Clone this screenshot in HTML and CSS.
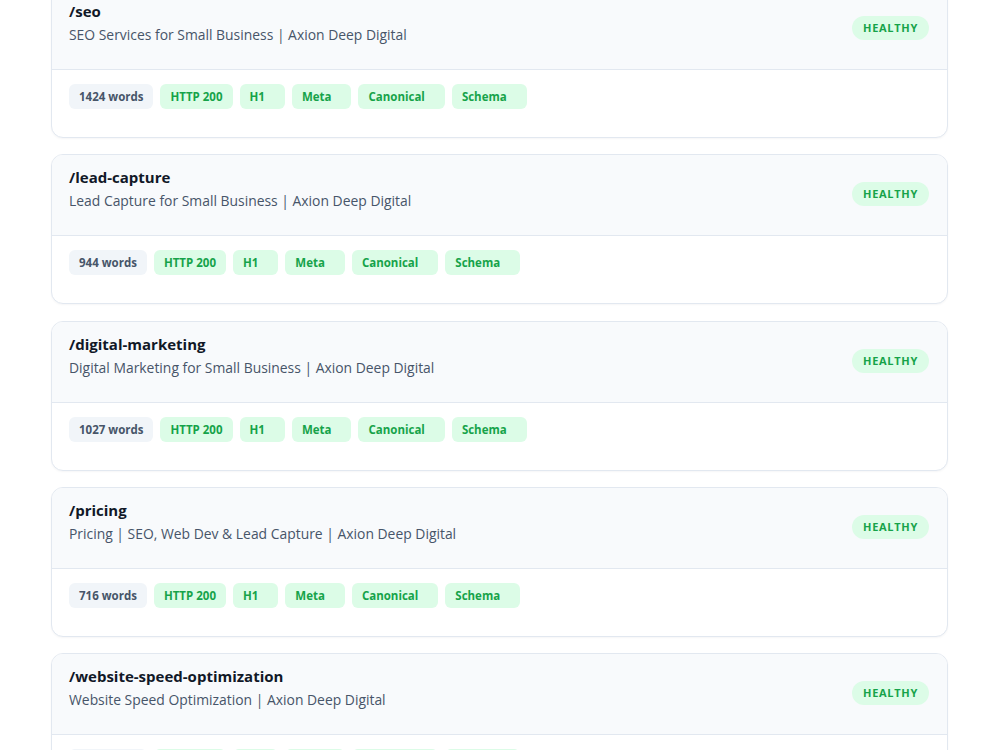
FILE: index.html
```html
<!DOCTYPE html>
<html lang="en">
<head>
<meta charset="utf-8">
<title>Pages</title>
<link rel="stylesheet" href="styles.css">
</head>
<body>
<main class="page-list">
  <section class="page-card">
    <header class="page-head">
      <div class="page-info">
        <div class="page-path">/seo</div>
        <div class="page-title">SEO Services for Small Business | Axion Deep Digital</div>
      </div>
      <span class="status">HEALTHY</span>
    </header>
    <div class="page-body">
      <span class="chip chip-gray">1424 words</span>
      <span class="chip chip-green">HTTP 200</span>
      <span class="chip chip-green chip-wide">H1</span>
      <span class="chip chip-green chip-wide">Meta</span>
      <span class="chip chip-green chip-wide">Canonical</span>
      <span class="chip chip-green chip-wide">Schema</span>
    </div>
  </section>
  <section class="page-card">
    <header class="page-head">
      <div class="page-info">
        <div class="page-path">/lead-capture</div>
        <div class="page-title">Lead Capture for Small Business | Axion Deep Digital</div>
      </div>
      <span class="status">HEALTHY</span>
    </header>
    <div class="page-body">
      <span class="chip chip-gray">944 words</span>
      <span class="chip chip-green">HTTP 200</span>
      <span class="chip chip-green chip-wide">H1</span>
      <span class="chip chip-green chip-wide">Meta</span>
      <span class="chip chip-green chip-wide">Canonical</span>
      <span class="chip chip-green chip-wide">Schema</span>
    </div>
  </section>
  <section class="page-card">
    <header class="page-head">
      <div class="page-info">
        <div class="page-path">/digital-marketing</div>
        <div class="page-title">Digital Marketing for Small Business | Axion Deep Digital</div>
      </div>
      <span class="status">HEALTHY</span>
    </header>
    <div class="page-body">
      <span class="chip chip-gray">1027 words</span>
      <span class="chip chip-green">HTTP 200</span>
      <span class="chip chip-green chip-wide">H1</span>
      <span class="chip chip-green chip-wide">Meta</span>
      <span class="chip chip-green chip-wide">Canonical</span>
      <span class="chip chip-green chip-wide">Schema</span>
    </div>
  </section>
  <section class="page-card">
    <header class="page-head">
      <div class="page-info">
        <div class="page-path">/pricing</div>
        <div class="page-title">Pricing | SEO, Web Dev &amp; Lead Capture | Axion Deep Digital</div>
      </div>
      <span class="status">HEALTHY</span>
    </header>
    <div class="page-body">
      <span class="chip chip-gray">716 words</span>
      <span class="chip chip-green">HTTP 200</span>
      <span class="chip chip-green chip-wide">H1</span>
      <span class="chip chip-green chip-wide">Meta</span>
      <span class="chip chip-green chip-wide">Canonical</span>
      <span class="chip chip-green chip-wide">Schema</span>
    </div>
  </section>
  <section class="page-card">
    <header class="page-head">
      <div class="page-info">
        <div class="page-path">/website-speed-optimization</div>
        <div class="page-title">Website Speed Optimization | Axion Deep Digital</div>
      </div>
      <span class="status">HEALTHY</span>
    </header>
    <div class="page-body">
      <span class="chip chip-gray">812 words</span>
      <span class="chip chip-green">HTTP 200</span>
      <span class="chip chip-green chip-wide">H1</span>
      <span class="chip chip-green chip-wide">Meta</span>
      <span class="chip chip-green chip-wide">Canonical</span>
      <span class="chip chip-green chip-wide">Schema</span>
    </div>
  </section>
</main>
</body>
</html>
```
FILE: styles.css
```css
html, body {
  margin: 0;
  padding: 0;
  background: #ffffff;
}
body {
  font-family: "Open Sans", "Noto Sans", sans-serif;
  color: #111827;
  overflow: hidden;
  height: 750px;
}
.page-list {
  display: flex;
  flex-direction: column;
  gap: 16.33px;
  padding: 0 52px 0 51px;
  margin-top: -12px;
}
.page-card {
  border: 1px solid #e2e8f0;
  border-radius: 12px;
  background: #ffffff;
  overflow: hidden;
  box-shadow: 0 1px 2px rgba(15, 23, 42, 0.04);
}
.page-head {
  display: flex;
  justify-content: space-between;
  align-items: flex-start;
  background: #f8fafc;
  border-bottom: 1px solid #e2e8f0;
  padding: 12px 18px 0 17px;
  height: 81px;
  box-sizing: border-box;
}
.page-info {
  display: flex;
  flex-direction: column;
  gap: 3px;
}
.page-path {
  font-size: 15px;
  font-weight: 700;
  line-height: 21px;
  color: #111827;
}
.page-title {
  font-size: 13.9px;
  line-height: 20px;
  color: #475569;
}
.status {
  margin-top: 15px;
  background: #dcfce7;
  color: #16a34a;
  font-size: 11px;
  font-weight: 700;
  letter-spacing: 0.7px;
  line-height: 24px;
  height: 24px;
  padding: 0 11px;
  border-radius: 12px;
}
.page-body {
  display: flex;
  gap: 7px;
  height: 67px;
  box-sizing: border-box;
  padding: 14px 17px 0;
}
.chip {
  font-size: 11.5px;
  font-weight: 700;
  line-height: 25px;
  height: 25px;
  padding: 0 10px;
  border-radius: 6px;
}
.chip-gray {
  background: #f1f5f9;
  color: #475569;
}
.chip-green {
  background: #dcfce7;
  color: #16a34a;
}
.chip-wide {
  padding-right: 20px;
}
```
